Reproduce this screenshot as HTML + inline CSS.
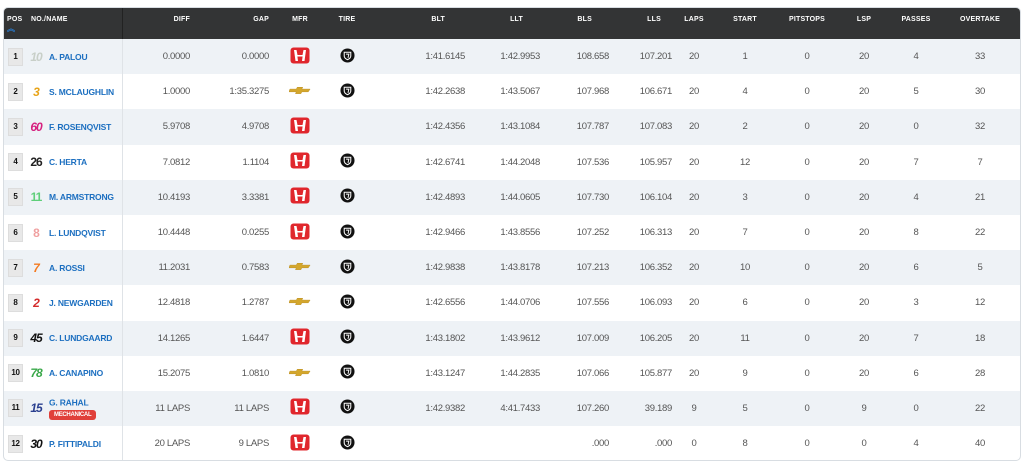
<!DOCTYPE html>
<html><head><meta charset="utf-8">
<style>
body{margin:0;background:#fff;width:1024px;height:463px;overflow:hidden;font-family:"Liberation Sans",sans-serif;}
.wrap{position:absolute;left:3px;top:7px;width:1018px;height:454px;border:1px solid #d8dde2;border-radius:5px;overflow:hidden;box-sizing:border-box}
table{border-collapse:collapse;table-layout:fixed;width:1018px;position:absolute;left:-1px;top:-1px}
th{background:#333435;color:#fff;font-size:7px;font-weight:bold;height:32px;padding:0 5px;vertical-align:top;padding-top:9px;box-sizing:border-box;letter-spacing:0.2px;white-space:nowrap}
td{height:35.2px;padding:0 5px;font-size:9.5px;color:#555;box-sizing:border-box;letter-spacing:-0.3px;white-space:nowrap}
tr:nth-child(even) td{background:#eef2f6}
.r{text-align:right}.c{text-align:center}.l{text-align:left}
.sep{border-right:1px solid #dfe3e7}
th.sep{border-right:1px solid #222}
.pos{display:inline-block;width:13px;height:16px;background:#e8e8e8;border:1px solid #ddd;color:#111;font-weight:bold;font-size:8px;text-align:center;line-height:16px;vertical-align:middle}
.num{display:inline-block;width:20px;font-weight:bold;font-style:italic;font-size:12px;text-align:center;vertical-align:middle;letter-spacing:-1px}
.nm{color:#1c6fc0;font-weight:bold;font-size:8.5px;vertical-align:middle;letter-spacing:-0.2px;margin-left:3px}
.mech{display:inline-block;background:#e0403a;color:#fff;font-size:6px;font-weight:bold;border-radius:3px;padding:2px 5px;margin-top:2px;margin-left:0}
</style></head><body>
<svg width="0" height="0" style="position:absolute">
<defs>
<symbol id="honda" viewBox="0 0 20 17"><rect x="0.5" y="0.5" width="19" height="16" rx="3" fill="#e0272d"/><path d="M4 3h2.5l1 5h5l1-5H16l-1.5 11H12l.6-4.5H7.4L8 14H5.5z" fill="#fff"/></symbol>
<symbol id="chevy" viewBox="0 0 24 8"><path d="M1 3h7l1-2h6l-1 2h9l-2 3h-7l-1 2H7l1-2H-0z" fill="#d4a72c" stroke="#b98b1c" stroke-width=".5"/></symbol>
<symbol id="tire" viewBox="0 0 16 16"><circle cx="8" cy="8" r="7.5" fill="#111"/><path d="M4.5 4.5h7v4c0 2-1.5 3-3.5 4-2-1-3.5-2-3.5-4z" fill="none" stroke="#fff" stroke-width="1.1"/><path d="M6.5 6.5h3l-1 4" fill="none" stroke="#fff" stroke-width="1"/></symbol>
</defs></svg>
<div class="wrap">
<table>
<colgroup><col style="width:23px"><col style="width:96px"><col style="width:73px"><col style="width:79px"><col style="width:52px"><col style="width:42px"><col style="width:102px"><col style="width:75px"><col style="width:69px"><col style="width:63px"><col style="width:34px"><col style="width:68px"><col style="width:56px"><col style="width:58px"><col style="width:46px"><col style="width:82px"></colgroup>
<tr><th class="l" style="padding-left:4px">POS<br><span style="color:#2a7cd0;font-size:8px">︽</span></th><th class="l sep" style="padding-left:5px">NO./NAME</th><th class="r">DIFF</th><th class="r">GAP</th><th class="c">MFR</th><th class="c">TIRE</th><th class="r" style="padding-right:25px">BLT</th><th class="r" style="padding-right:22px">LLT</th><th class="r" style="padding-right:22px">BLS</th><th class="r" style="padding-right:16px">LLS</th><th class="c">LAPS</th><th class="c">START</th><th class="c">PITSTOPS</th><th class="c">LSP</th><th class="c">PASSES</th><th class="c">OVERTAKE</th></tr>
<tr><td><span class="pos">1</span></td><td class="sep" style="padding:0"><span class="num" style="color:#c8cfc8">10</span><span class="nm">A. PALOU</span></td><td class="r">0.0000</td><td class="r">0.0000</td><td class="c"><svg width="20" height="17"><use href="#honda"/></svg></td><td class="c"><svg width="15" height="15"><use href="#tire"/></svg></td><td class="r">1:41.6145</td><td class="r">1:42.9953</td><td class="r">108.658</td><td class="r">107.201</td><td class="c">20</td><td class="c">1</td><td class="c">0</td><td class="c">20</td><td class="c">4</td><td class="c">33</td></tr>
<tr><td><span class="pos">2</span></td><td class="sep" style="padding:0"><span class="num" style="color:#e8a317">3</span><span class="nm">S. MCLAUGHLIN</span></td><td class="r">1.0000</td><td class="r">1:35.3275</td><td class="c"><svg width="22" height="8"><use href="#chevy"/></svg></td><td class="c"><svg width="15" height="15"><use href="#tire"/></svg></td><td class="r">1:42.2638</td><td class="r">1:43.5067</td><td class="r">107.968</td><td class="r">106.671</td><td class="c">20</td><td class="c">4</td><td class="c">0</td><td class="c">20</td><td class="c">5</td><td class="c">30</td></tr>
<tr><td><span class="pos">3</span></td><td class="sep" style="padding:0"><span class="num" style="color:#d6217f">60</span><span class="nm">F. ROSENQVIST</span></td><td class="r">5.9708</td><td class="r">4.9708</td><td class="c"><svg width="20" height="17"><use href="#honda"/></svg></td><td class="c"></td><td class="r">1:42.4356</td><td class="r">1:43.1084</td><td class="r">107.787</td><td class="r">107.083</td><td class="c">20</td><td class="c">2</td><td class="c">0</td><td class="c">20</td><td class="c">0</td><td class="c">32</td></tr>
<tr><td><span class="pos">4</span></td><td class="sep" style="padding:0"><span class="num" style="color:#222;font-style:normal">26</span><span class="nm">C. HERTA</span></td><td class="r">7.0812</td><td class="r">1.1104</td><td class="c"><svg width="20" height="17"><use href="#honda"/></svg></td><td class="c"><svg width="15" height="15"><use href="#tire"/></svg></td><td class="r">1:42.6741</td><td class="r">1:44.2048</td><td class="r">107.536</td><td class="r">105.957</td><td class="c">20</td><td class="c">12</td><td class="c">0</td><td class="c">20</td><td class="c">7</td><td class="c">7</td></tr>
<tr><td><span class="pos">5</span></td><td class="sep" style="padding:0"><span class="num" style="color:#5fcf7a;font-style:normal">11</span><span class="nm">M. ARMSTRONG</span></td><td class="r">10.4193</td><td class="r">3.3381</td><td class="c"><svg width="20" height="17"><use href="#honda"/></svg></td><td class="c"><svg width="15" height="15"><use href="#tire"/></svg></td><td class="r">1:42.4893</td><td class="r">1:44.0605</td><td class="r">107.730</td><td class="r">106.104</td><td class="c">20</td><td class="c">3</td><td class="c">0</td><td class="c">20</td><td class="c">4</td><td class="c">21</td></tr>
<tr><td><span class="pos">6</span></td><td class="sep" style="padding:0"><span class="num" style="color:#f0a0a0;font-style:normal">8</span><span class="nm">L. LUNDQVIST</span></td><td class="r">10.4448</td><td class="r">0.0255</td><td class="c"><svg width="20" height="17"><use href="#honda"/></svg></td><td class="c"><svg width="15" height="15"><use href="#tire"/></svg></td><td class="r">1:42.9466</td><td class="r">1:43.8556</td><td class="r">107.252</td><td class="r">106.313</td><td class="c">20</td><td class="c">7</td><td class="c">0</td><td class="c">20</td><td class="c">8</td><td class="c">22</td></tr>
<tr><td><span class="pos">7</span></td><td class="sep" style="padding:0"><span class="num" style="color:#f47a20">7</span><span class="nm">A. ROSSI</span></td><td class="r">11.2031</td><td class="r">0.7583</td><td class="c"><svg width="22" height="8"><use href="#chevy"/></svg></td><td class="c"><svg width="15" height="15"><use href="#tire"/></svg></td><td class="r">1:42.9838</td><td class="r">1:43.8178</td><td class="r">107.213</td><td class="r">106.352</td><td class="c">20</td><td class="c">10</td><td class="c">0</td><td class="c">20</td><td class="c">6</td><td class="c">5</td></tr>
<tr><td><span class="pos">8</span></td><td class="sep" style="padding:0"><span class="num" style="color:#d42a2a">2</span><span class="nm">J. NEWGARDEN</span></td><td class="r">12.4818</td><td class="r">1.2787</td><td class="c"><svg width="22" height="8"><use href="#chevy"/></svg></td><td class="c"><svg width="15" height="15"><use href="#tire"/></svg></td><td class="r">1:42.6556</td><td class="r">1:44.0706</td><td class="r">107.556</td><td class="r">106.093</td><td class="c">20</td><td class="c">6</td><td class="c">0</td><td class="c">20</td><td class="c">3</td><td class="c">12</td></tr>
<tr><td><span class="pos">9</span></td><td class="sep" style="padding:0"><span class="num" style="color:#111">45</span><span class="nm">C. LUNDGAARD</span></td><td class="r">14.1265</td><td class="r">1.6447</td><td class="c"><svg width="20" height="17"><use href="#honda"/></svg></td><td class="c"><svg width="15" height="15"><use href="#tire"/></svg></td><td class="r">1:43.1802</td><td class="r">1:43.9612</td><td class="r">107.009</td><td class="r">106.205</td><td class="c">20</td><td class="c">11</td><td class="c">0</td><td class="c">20</td><td class="c">7</td><td class="c">18</td></tr>
<tr><td><span class="pos">10</span></td><td class="sep" style="padding:0"><span class="num" style="color:#3aa84a">78</span><span class="nm">A. CANAPINO</span></td><td class="r">15.2075</td><td class="r">1.0810</td><td class="c"><svg width="22" height="8"><use href="#chevy"/></svg></td><td class="c"><svg width="15" height="15"><use href="#tire"/></svg></td><td class="r">1:43.1247</td><td class="r">1:44.2835</td><td class="r">107.066</td><td class="r">105.877</td><td class="c">20</td><td class="c">9</td><td class="c">0</td><td class="c">20</td><td class="c">6</td><td class="c">28</td></tr>
<tr><td><span class="pos">11</span></td><td class="sep" style="padding:0"><span class="num" style="color:#2a3f8f">15</span><span style="display:inline-block;vertical-align:middle;margin-left:3px"><span class="nm" style="margin-left:0">G. RAHAL</span><br><span class="mech">MECHANICAL</span></span></td><td class="r">11 LAPS</td><td class="r">11 LAPS</td><td class="c"><svg width="20" height="17"><use href="#honda"/></svg></td><td class="c"><svg width="15" height="15"><use href="#tire"/></svg></td><td class="r">1:42.9382</td><td class="r">4:41.7433</td><td class="r">107.260</td><td class="r">39.189</td><td class="c">9</td><td class="c">5</td><td class="c">0</td><td class="c">9</td><td class="c">0</td><td class="c">22</td></tr>
<tr><td><span class="pos">12</span></td><td class="sep" style="padding:0"><span class="num" style="color:#111">30</span><span class="nm">P. FITTIPALDI</span></td><td class="r">20 LAPS</td><td class="r">9 LAPS</td><td class="c"><svg width="20" height="17"><use href="#honda"/></svg></td><td class="c"><svg width="15" height="15"><use href="#tire"/></svg></td><td class="r"></td><td class="r"></td><td class="r">.000</td><td class="r">.000</td><td class="c">0</td><td class="c">8</td><td class="c">0</td><td class="c">0</td><td class="c">4</td><td class="c">40</td></tr>
</table>
</div>
</body></html>
